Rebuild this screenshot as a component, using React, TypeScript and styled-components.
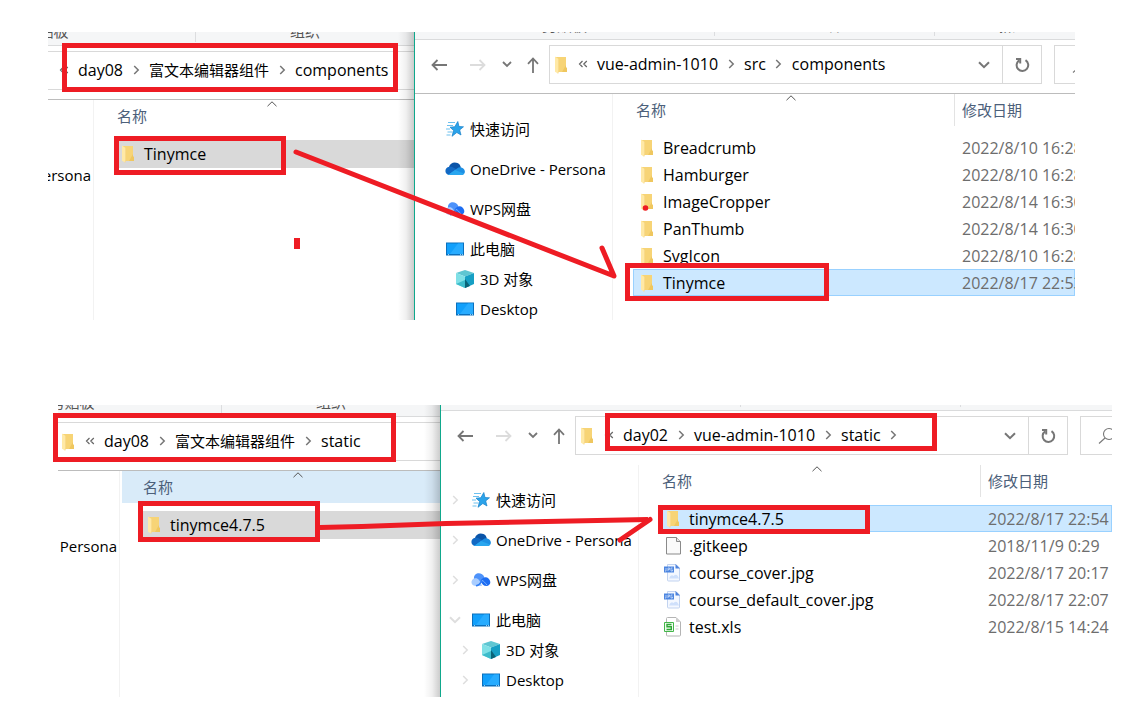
import React from "react";
import styled, { createGlobalStyle } from "styled-components";

const GlobalStyle = createGlobalStyle`
  * { box-sizing: border-box; }
  body {
    margin: 0;
    background: #fff;
    color: #000;
    font-family: "Open Sans", "Noto Sans CJK SC", sans-serif;
    font-size: 15px;
    line-height: 20px;
  }
  a { color: inherit; text-decoration: none; }
  button { border: 0; padding: 0; background: none; font: inherit; cursor: pointer; }
  svg { display: block; flex: none; }
`;

const RED = "#ee1c24";

/* ---------- layout ---------- */

const Page = styled.main`
  display: flex;
  flex-direction: column;
`;

const Stage = styled.section<{ $margin: string }>`
  position: relative;
  display: flex;
  margin: ${(p) => p.$margin};
`;

const BackWindow = styled.div<{ $width: number }>`
  position: relative;
  display: flex;
  flex-direction: column;
  flex: none;
  width: ${(p) => p.$width}px;
  overflow: hidden;
  &::after {
    content: "";
    position: absolute;
    inset: 0 0 0 auto;
    width: 16px;
    background: linear-gradient(to right, rgba(0, 0, 0, 0), rgba(0, 0, 0, 0.06) 50%, rgba(0, 0, 0, 0.2));
  }
`;

const FrontWindow = styled.div`
  display: flex;
  flex-direction: column;
  flex: 1;
  min-width: 0;
  overflow: hidden;
  border-left: 1px solid #0fa88c;
`;

const RibbonBar = styled.div<{ $height: number }>`
  display: flex;
  align-items: flex-end;
  height: ${(p) => p.$height}px;
  overflow: hidden;
  background: #f5f6f7;
  border-bottom: 1px solid #dadbdc;
`;

const RibbonGroup = styled.div<{ $width: number; $shift?: number }>`
  flex: none;
  width: ${(p) => p.$width}px;
  margin: 0 0 3px ${(p) => p.$shift ?? 0}px;
  padding-bottom: 1px;
  border-right: 1px solid #dcdddf;
  color: #555;
  text-align: center;
`;

const Toolbar = styled.div<{ $line: boolean }>`
  display: flex;
  padding: 5px 0 9px;
  border-bottom: 1px solid ${(p) => (p.$line ? "#bcbcbc" : "#fff")};
`;

const AddressBar = styled.nav<{ $boxed?: boolean; $indent: number }>`
  display: flex;
  align-items: center;
  flex: 1;
  min-width: 0;
  height: 39px;
  padding-left: ${(p) => p.$indent}px;
  border: solid #d9d9d9;
  border-width: ${(p) => (p.$boxed ? "1px" : "1px 0")};
  white-space: nowrap;
`;

const CrumbList = styled.div`
  display: flex;
  align-items: center;
  padding-bottom: 2px;
`;

const Overflow = styled.span`
  display: flex;
  justify-content: center;
  width: 29px;
`;

const Crumb = styled.a<{ $cjk?: boolean }>`
  font-size: ${(p) => (p.$cjk ? 15 : 16)}px;
`;

const Separator = styled.span`
  display: flex;
  justify-content: center;
  width: 26px;
`;

const ToolButton = styled.button<{ $width: number }>`
  display: flex;
  align-items: center;
  justify-content: center;
  flex: none;
  width: ${(p) => p.$width}px;
`;

const History = styled.div`
  display: flex;
  padding-left: 4px;
`;

const AddressEnd = styled.div`
  display: flex;
  align-self: stretch;
  margin-left: auto;
`;

const RefreshButton = styled(ToolButton)`
  border-left: 1px solid #d9d9d9;
`;

const SearchBox = styled.label<{ $width: number }>`
  display: flex;
  align-items: center;
  flex: none;
  width: ${(p) => p.$width}px;
  margin-left: 12px;
  padding-left: 17px;
  overflow: hidden;
  border: solid #d9d9d9;
  border-width: 1px 0 1px 1px;
`;

const SearchInput = styled.input`
  width: 120px;
  border: 0;
  outline: 0;
  background: none;
`;

const Body = styled.div`
  display: flex;
  flex: 1;
  min-height: 0;
`;

const BackSidebar = styled.div<{ $width: number }>`
  display: flex;
  justify-content: flex-end;
  flex: none;
  width: ${(p) => p.$width}px;
  padding: 65px 2px 0 0;
  overflow: hidden;
  border-right: 1px solid #f2f2f2;
`;

const Sidebar = styled.ul<{ $bottom: number }>`
  flex: none;
  width: 198px;
  margin: 0;
  padding: 24px 0 ${(p) => p.$bottom}px;
  list-style: none;
  border-right: 1px solid #f2f2f2;
`;

const SidebarItem = styled.li<{ $nested?: boolean }>`
  display: flex;
  align-items: center;
  height: 22px;
  margin-top: ${(p) => (p.$nested ? 8 : 18)}px;
  padding-left: ${(p) => (p.$nested ? 14 : 4)}px;
  white-space: nowrap;
  &:first-child { margin-top: 0; }
`;

const Expander = styled.button<{ $shown: boolean }>`
  display: flex;
  justify-content: center;
  width: 20px;
  margin-right: 6px;
  visibility: ${(p) => (p.$shown ? "visible" : "hidden")};
`;

const SidebarLink = styled.a`
  display: flex;
  align-items: center;
  gap: 5px;
`;

const FilePane = styled.div`
  flex: 1;
  min-width: 0;
  padding-left: 20px;
  overflow: hidden;
`;

const FileTable = styled.table`
  width: 100%;
  min-width: 442px;
  table-layout: fixed;
  border-collapse: collapse;
  white-space: nowrap;
  td, th { padding: 0; }
`;

const NameCol = styled.col`
  width: 322px;
`;

const HeadCell = styled.th`
  height: 40px;
  vertical-align: top;
  color: #4c607a;
  font-weight: 400;
  text-align: left;
`;

const HeadLabel = styled.div<{ $bleed?: number; $pad: number; $hot?: boolean; $divider?: boolean }>`
  position: relative;
  height: 32px;
  margin-left: -${(p) => p.$bleed ?? 0}px;
  padding-left: ${(p) => p.$pad}px;
  line-height: 32px;
  background: ${(p) => (p.$hot ? "#d9ebf9" : "none")};
  border-right: ${(p) => (p.$divider ? "1px solid #e3e3e3" : "0")};
`;

const SortMark = styled.span`
  position: absolute;
  top: 1px;
  left: calc(50% - 5px);
`;

const Row = styled.tr<{ $height: number; $state?: "active" | "idle" }>`
  height: ${(p) => p.$height}px;
  background: ${(p) => (p.$state === "active" ? "#cce8ff" : p.$state === "idle" ? "#d9d9d9" : "none")};
  box-shadow: ${(p) => (p.$state === "active" ? "inset 0 0 0 1px #99d1ff" : "none")};
`;

const FileName = styled.a`
  display: flex;
  align-items: center;
  font-size: 16px;
`;

const IconSlot = styled.span`
  display: flex;
  justify-content: center;
  width: 20px;
  margin: 0 6px 0 4px;
`;

const DateCell = styled.td`
  color: #6d6d6d;
  font-size: 16px;
  && { padding-left: 7px; }
`;

const BackTable = styled(FileTable)`
  flex: none;
  align-self: flex-start;
  width: 334px;
  min-width: 0;
  margin-left: 20px;
`;

const Ink = styled.svg`
  position: absolute;
  inset: 0;
  width: 100%;
  height: 100%;
  overflow: visible;
  pointer-events: none;
`;

/* ---------- icons ---------- */

const Folder = () => (
  <svg width="14" height="18" viewBox="0 0 14 18">
    <path d="M1 1h11v10.500l1 1V16H4z" fill="#f7d476" />
    <path d="M8 16h5v-4l-1-.8V9z" fill="#efc75f" />
    <path d="M1 .6 4.600 3v12.200L4 17.600 1 15.800z" fill="#ffe9a6" />
    <path d="M4.600 3v12.200L4 17.600" fill="none" stroke="#f3d486" strokeWidth=".6" />
  </svg>
);

const Guillemet = () => (
  <svg width="10" height="8" viewBox="0 0 10 8" fill="none" stroke="#666" strokeWidth="1.200">
    <path d="M4.500 1 1.500 4l3 3M8.800 1l-3 3 3 3" />
  </svg>
);

const Chevron = ({ color = "#767676", down = false }: { color?: string; down?: boolean }) =>
  down ? (
    <svg width="12" height="8" viewBox="0 0 12 8" fill="none" stroke={color} strokeWidth="2">
      <path d="M1 1.200 6 6.200l5-5" />
    </svg>
  ) : (
    <svg width="7" height="10" viewBox="0 0 7 10" fill="none" stroke={color} strokeWidth="1.500">
      <path d="M1.200 1 5.200 5l-4 4" />
    </svg>
  );

const SmallDown = () => (
  <svg width="10" height="7" viewBox="0 0 10 7" fill="none" stroke="#767676" strokeWidth="1.800">
    <path d="M1 1l4 4 4-4" />
  </svg>
);

const SortUp = () => (
  <svg width="10" height="6" viewBox="0 0 10 6" fill="none" stroke="#555" strokeWidth="1">
    <path d="M.5 5.200 5 .8l4.500 4.400" />
  </svg>
);

const ArrowLeft = ({ color, flip }: { color: string; flip?: boolean }) => (
  <svg width="16" height="12" viewBox="0 0 16 12" fill="none" stroke={color} strokeWidth="1.800">
    <path d={flip ? "M0 6h14.500M9.500 1l5 5-5 5" : "M16 6H1.500M6.500 1l-5 5 5 5"} />
  </svg>
);

const ArrowUp = () => (
  <svg width="12" height="16" viewBox="0 0 12 16" fill="none" stroke="#767676" strokeWidth="1.800">
    <path d="M6 16V1.500M1 6.800l5-5.300 5 5.300" />
  </svg>
);

const Refresh = () => (
  <svg width="15" height="16" viewBox="0 0 15 16" fill="none" stroke="#767676" strokeWidth="2">
    <path d="M10.500 3.200A5.800 5.800 0 1 1 4.200 3.300" />
    <path d="M1 2h4.200v4.600" />
  </svg>
);

const Magnifier = () => (
  <svg width="18" height="18" viewBox="0 0 18 18" fill="none" stroke="#777" strokeWidth="1.100">
    <circle cx="11" cy="7" r="5.500" />
    <path d="M7 11 1 16.500" />
  </svg>
);

const Star = () => (
  <svg width="20" height="18" viewBox="0 0 20 18">
    <path d="M3 2.500h7M2 5.500h6M1 9h4M2.500 12h5M1.500 15h4" stroke="#6cc0ee" strokeWidth="1" />
    <path d="M12.800 1.500l1.200 5 4.500.3-3.800 3.100 1.300 5.100-4.200-2.500-4.800 3.800 1.600-5.800L5 7.200l4.800-.5z" fill="#2ba3ea" stroke="#1580c8" strokeWidth=".7" />
  </svg>
);

const OneDrive = () => (
  <svg width="20" height="14" viewBox="0 0 20 14">
    <path d="M4 5C5 1 9-.5 12.500 1c2 .8 3 2.600 3.400 4.600L10 9z" fill="#0a54a8" />
    <path d="M5 13C-1 13-1 5.500 4.300 4.800 7 4.300 8.800 5.500 16 10l-5 3z" fill="#1269c4" />
    <path d="M3 13 12 6.500c2-1.500 4-1.400 5.500-.4C21.500 8.500 20 13 16.500 13z" fill="#1c8fe3" />
    <path d="M3 13l7-5 9 3.500c-.6 1-1.500 1.500-2.500 1.500z" fill="#29a6ef" />
  </svg>
);

const WpsCloud = () => (
  <svg width="20" height="14" viewBox="0 0 20 14">
    <path d="M3 6C2-.5 11-2 13.500 4.500L10 10z" fill="#4d92fa" />
    <path d="M4 5.200c3-.4 5 2 7 7.800H4.500C-.8 13-.8 6.200 4 5.200z" fill="#a9cdff" />
    <path d="M9.500 8c2-4.200 6-4.600 8-2.500C21 9 19 13 15.500 13c-3 0-4.500-2-6-5z" fill="#1d6df2" />
    <path d="M5 12.800c4 0 4.500-3.500 6.500-5.800" fill="none" stroke="#2f7df5" strokeWidth="1.400" />
    <path d="M11 7.500c2 .5 3 2.500 5 4.500" fill="none" stroke="#7db2ff" strokeWidth="1" />
  </svg>
);

const Monitor = () => (
  <svg width="20" height="14" viewBox="0 0 20 14">
    <path d="M1 .5h18v13H1z" fill="#0b70bd" />
    <path d="M2 1.500h16v10.500H2z" fill="#12a0fb" />
    <path d="M13 1.500h5v10.500H5z" fill="#28acff" />
    <path d="M3 12.700h1M15 12.700h1M17 12.700h1" stroke="#b9e2fb" />
  </svg>
);

const Cube = () => (
  <svg width="20" height="18" viewBox="0 0 20 18">
    <path d="M10 0l9 3-9 3.500L1 3z" fill="#5fc6d2" />
    <path d="M1 3l9 3.500V18l-9-4z" fill="#7fe0e6" />
    <path d="M19 3l-9 3.500V18l9-4z" fill="#169fc4" />
    <path d="M10 10l-9 4 9 4z" fill="#3dbccb" />
    <path d="M10 9l5 7-5 2z" fill="#0a6478" />
  </svg>
);

const Sheet = () => (
  <svg width="20" height="20" viewBox="0 0 20 20">
    <path d="M3.500 1.500h10l4 4v12.500h-14z" fill="#fafafa" stroke="#8a8a8a" />
    <path d="M13.500 1.500v4h4" fill="#e6e6e6" stroke="#8a8a8a" />
  </svg>
);

const Picture = () => (
  <svg width="20" height="20" viewBox="0 0 20 20">
    <path d="M4.500 1.500h8.500l3.500 3.500v12q0 1-1 1h-10q-1 0-1-1z" fill="#f4f8ff" stroke="#c2d3f0" />
    <path d="M12.500 1 17 5.500h-4.500z" fill="#4d82dc" />
    <path d="M6 15.500q2-5 4.500-2.500 3.500-3.500 5.500 2.500z" fill="#cfe0fb" />
    <path d="M1 3.500h10v6H1z" fill="#4d86e0" />
    <path d="M3 5v3H2M5 8V5h1.500v1.500H5M9.500 5H8v3h1.500V6.700" fill="none" stroke="#c9dcfa" strokeWidth=".8" />
  </svg>
);

const Spreadsheet = () => (
  <svg width="20" height="20" viewBox="0 0 20 20">
    <path d="M3.500 1.500q0-1 1-1H13l4.500 4.500v13q0 1-1 1h-12q-1 0-1-1z" fill="#fff" stroke="#b4b4b4" />
    <path d="M13 .5V5h4.500z" fill="#ccc" />
    <path d="M1.500 5.500h9v9h-9z" fill="#f1fbf0" stroke="#43b649" />
    <path d="M8.500 7.500H4v2.300h4.300v2.700H3.500" fill="none" stroke="#2fa836" strokeWidth="1.400" />
    <path d="M12.500 9h3M12.500 12h3" stroke="#ccc" />
  </svg>
);

const icons = { folder: Folder, sheet: Sheet, picture: Picture, xls: Spreadsheet };

/* ---------- parts ---------- */

type CrumbItem = { text: string; cjk?: boolean };

const Crumbs = ({ items, trailing }: { items: CrumbItem[]; trailing?: boolean }) => (
  <CrumbList>
    <Overflow><Guillemet /></Overflow>
    {items.map((c, i) => (
      <React.Fragment key={c.text}>
        <Crumb href="#" $cjk={c.cjk}>{c.text}</Crumb>
        {(i < items.length - 1 || trailing) && <Separator><Chevron /></Separator>}
      </React.Fragment>
    ))}
  </CrumbList>
);

type BackProps = {
  width: number;
  ribbonHeight: number;
  ribbonShift: number;
  folder?: boolean;
  indent: number;
  last: string;
  sidebarWidth: number;
  file: string;
  hot?: boolean;
};

const BackExplorer = (p: BackProps) => (
  <BackWindow $width={p.width}>
    <RibbonBar $height={p.ribbonHeight}>
      <RibbonGroup $width={299} $shift={p.ribbonShift}>剪贴板</RibbonGroup>
      <RibbonGroup $width={219}>组织</RibbonGroup>
    </RibbonBar>
    <Toolbar $line>
      <AddressBar $indent={p.indent} aria-label="路径">
        {p.folder && <Folder />}
        <Crumbs items={[{ text: "day08" }, { text: "富文本编辑器组件", cjk: true }, { text: p.last }]} />
      </AddressBar>
    </Toolbar>
    <Body>
      <BackSidebar $width={p.sidebarWidth}><a href="#">Persona</a></BackSidebar>
      <BackTable>
        <thead>
          <tr>
            <HeadCell>
              <HeadLabel $bleed={18} $pad={21} $hot={p.hot}>名称<SortMark><SortUp /></SortMark></HeadLabel>
            </HeadCell>
          </tr>
        </thead>
        <tbody>
          <Row $height={28} $state="idle">
            <td><FileName href="#"><IconSlot><Folder /></IconSlot>{p.file}</FileName></td>
          </Row>
        </tbody>
      </BackTable>
    </Body>
  </BackWindow>
);

type FileItem = { name: string; date: string; icon?: keyof typeof icons; selected?: boolean };

type FrontProps = {
  ribbonHeight: number;
  line: boolean;
  crumbs: CrumbItem[];
  trailing?: boolean;
  searchWidth: number;
  expanders: boolean;
  bottom: number;
  files: FileItem[];
};

const places = [
  { label: "快速访问", Icon: Star },
  { label: "OneDrive - Persona", Icon: OneDrive },
  { label: "WPS网盘", Icon: WpsCloud },
  { label: "此电脑", Icon: Monitor, open: true },
  { label: "3D 对象", Icon: Cube, nested: true },
  { label: "Desktop", Icon: Monitor, nested: true },
];

const FrontExplorer = (p: FrontProps) => (
  <FrontWindow>
    <RibbonBar $height={p.ribbonHeight}>
      <RibbonGroup $width={300}>剪贴板</RibbonGroup>
      <RibbonGroup $width={220}>组织</RibbonGroup>
      <RibbonGroup $width={156}>新建</RibbonGroup>
    </RibbonBar>
    <Toolbar $line={p.line}>
      <History>
        <ToolButton $width={39} aria-label="后退"><ArrowLeft color="#767676" /></ToolButton>
        <ToolButton $width={39} aria-label="前进"><ArrowLeft color="#dcdcdc" flip /></ToolButton>
        <ToolButton $width={20} aria-label="最近位置"><SmallDown /></ToolButton>
        <ToolButton $width={32} aria-label="上移"><ArrowUp /></ToolButton>
      </History>
      <AddressBar $boxed $indent={4} aria-label="路径">
        <Folder />
        <Crumbs items={p.crumbs} trailing={p.trailing} />
        <AddressEnd>
          <ToolButton $width={36} aria-label="历史记录"><Chevron down /></ToolButton>
          <RefreshButton $width={39} aria-label="刷新"><Refresh /></RefreshButton>
        </AddressEnd>
      </AddressBar>
      <SearchBox $width={p.searchWidth}>
        <Magnifier />
        <SearchInput type="search" aria-label="搜索" />
      </SearchBox>
    </Toolbar>
    <Body>
      <Sidebar $bottom={p.bottom}>
        {places.map(({ label, Icon, open, nested }) => (
          <SidebarItem key={label} $nested={nested}>
            <Expander $shown={p.expanders} aria-label={"展开 " + label}>
              <Chevron color="#dedede" down={open} />
            </Expander>
            <SidebarLink href="#"><Icon />{label}</SidebarLink>
          </SidebarItem>
        ))}
      </Sidebar>
      <FilePane>
        <FileTable>
          <colgroup><NameCol /><col /></colgroup>
          <thead>
            <tr>
              <HeadCell>
                <HeadLabel $bleed={5} $pad={8} $divider>名称<SortMark><SortUp /></SortMark></HeadLabel>
              </HeadCell>
              <HeadCell><HeadLabel $pad={7}>修改日期</HeadLabel></HeadCell>
            </tr>
          </thead>
          <tbody>
            {p.files.map((f) => {
              const Icon = icons[f.icon ?? "folder"];
              return (
                <Row key={f.name} $height={27} $state={f.selected ? "active" : undefined}>
                  <td><FileName href="#"><IconSlot><Icon /></IconSlot>{f.name}</FileName></td>
                  <DateCell>{f.date}</DateCell>
                </Row>
              );
            })}
          </tbody>
        </FileTable>
      </FilePane>
    </Body>
  </FrontWindow>
);

export default function App() {
  return (
    <Page>
      <GlobalStyle />
      <Stage $margin="32px 69px 0 48px">
        <BackExplorer
          width={366} ribbonHeight={14} ribbonShift={-151} indent={1}
          last="components" sidebarWidth={46} file="Tinymce"
        />
        <FrontExplorer
          ribbonHeight={8} line searchWidth={21} expanders={false} bottom={0}
          crumbs={[{ text: "vue-admin-1010" }, { text: "src" }, { text: "components" }]}
          files={[
            { name: "Breadcrumb", date: "2022/8/10 16:28" },
            { name: "Hamburger", date: "2022/8/10 16:28" },
            { name: "ImageCropper", date: "2022/8/14 16:30" },
            { name: "PanThumb", date: "2022/8/14 16:30" },
            { name: "SvgIcon", date: "2022/8/10 16:28" },
            { name: "Tinymce", date: "2022/8/17 22:53", selected: true },
          ]}
        />
        <Ink aria-hidden="true" fill="none" stroke={RED} strokeWidth="5">
          <path d="M16.500 13.500h331v44h-331zM68.500 106.500h167v34h-167zM579.500 233.500h199v33h-199z" />
          <path d="M248 120 566 244 554 216" strokeLinecap="round" strokeLinejoin="round" />
          <path d="M246 206h6v11h-6z" fill={RED} stroke="none" />
          <circle cx="597.500" cy="176" r="2.800" fill={RED} stroke="none" />
        </Ink>
      </Stage>
      <Stage $margin="85px 32px 0 58px">
        <BackExplorer
          width={382} ribbonHeight={12} ribbonShift={-135} indent={3} folder
          last="static" sidebarWidth={62} file="tinymce4.7.5" hot
        />
        <FrontExplorer
          ribbonHeight={6} line={false} searchWidth={32} expanders bottom={6} trailing
          crumbs={[{ text: "day02" }, { text: "vue-admin-1010" }, { text: "static" }]}
          files={[
            { name: "tinymce4.7.5", date: "2022/8/17 22:54", selected: true },
            { name: ".gitkeep", date: "2018/11/9 0:29", icon: "sheet" },
            { name: "course_cover.jpg", date: "2022/8/17 20:17", icon: "picture" },
            { name: "course_default_cover.jpg", date: "2022/8/17 22:07", icon: "picture" },
            { name: "test.xls", date: "2022/8/15 14:24", icon: "xls" },
          ]}
        />
        <Ink aria-hidden="true" fill="none" stroke={RED} strokeWidth="5">
          <path d="M-2.500 10.500h338v44h-338zM82.500 98.500h177v36h-177zM549.500 10.500h327v33h-327zM602.500 102.500h207v24h-207z" />
          <path d="M262 122.500 304 121.500 388 118.500 590 114.500" />
          <path d="M592 114.500 562 135" strokeLinecap="round" />
        </Ink>
      </Stage>
    </Page>
  );
}
